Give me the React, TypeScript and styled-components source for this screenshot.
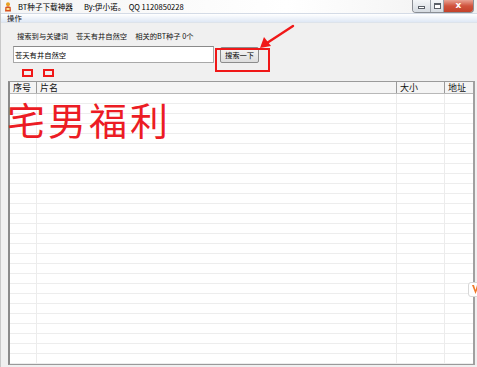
import styled, { createGlobalStyle } from "styled-components";

const GlobalStyle = createGlobalStyle`
  html, body {
    margin: 0;
    padding: 0;
    background: #f0f0f0;
  }
  * {
    box-sizing: border-box;
  }
`;

const FONT = `"Noto Sans CJK SC", "Liberation Sans", sans-serif`;

const columns = [
  { title: "序号", width: 27 },
  { title: "片名", width: 360 },
  { title: "大小", width: 48 },
  { title: "地址", width: 29 },
];

const rowCount = 27;

export default function App() {
  return (
    <>
      <GlobalStyle />
      <Window>
        <TitleBar>
          <AppIcon viewBox="0 0 8 10">
            <circle cx="4" cy="2.2" r="2" fill="#e8a020" />
            <path d="M1 9.5 L1.3 5 Q4 3.5 6.7 5 L7 9.5 Z" fill="#d9531e" />
            <rect x="2.5" y="6" width="3" height="2" fill="#fbe08a" />
          </AppIcon>
          <TitleText>BT种子下载神器</TitleText>
          <TitleText>By:伊小诺。&nbsp; QQ 1120850228</TitleText>
          <WindowButtons>
            <CaptionButton $w={18}>
              <MinGlyph />
            </CaptionButton>
            <CaptionButton $w={13}>
              <MaxGlyph />
            </CaptionButton>
            <CloseButton>x</CloseButton>
          </WindowButtons>
        </TitleBar>

        <MenuBar>
          <MenuItem>操作</MenuItem>
        </MenuBar>

        <Body>
          <InfoRow>
            <span>搜索到与关键词</span>
            <span>苍天有井自然空</span>
            <span>相关的BT种子 0个</span>
          </InfoRow>

          <SearchRow>
            <SearchInput defaultValue="苍天有井自然空" />
            <SearchButton>搜索一下</SearchButton>
          </SearchRow>

          <ListView>
            <HeaderRow>
              {columns.map((c) => (
                <HeaderCell key={c.title} style={{ width: c.width }}>
                  {c.title}
                </HeaderCell>
              ))}
            </HeaderRow>
            <Rows>
              {Array.from({ length: rowCount }).map((_, i) => (
                <Row key={i}>
                  {columns.map((c) => (
                    <Cell key={c.title} style={{ width: c.width }} />
                  ))}
                </Row>
              ))}
            </Rows>
          </ListView>
        </Body>

        <Annotation $x={214} $y={48} $w={55} $h={24} />
        <Annotation $x={21} $y={69} $w={11} $h={8} />
        <Annotation $x={42} $y={69} $w={11} $h={8} />

        <Arrow viewBox="0 0 477 367">
          <line
            x1="292"
            y1="26"
            x2="266"
            y2="43"
            stroke="#f01818"
            strokeWidth="2.4"
            strokeLinecap="round"
          />
          <polygon points="259,48 263,37 270,46" fill="#f01818" />
        </Arrow>

        <Stamp>宅男福利</Stamp>

        <SideTab>
          <svg width="7" height="9" viewBox="0 0 7 9">
            <path d="M0 0 L3.5 9 L7 0 L5 0 L3.5 5 L2 0 Z" fill="#f07a2a" />
          </svg>
        </SideTab>
      </Window>
    </>
  );
}

const Window = styled.div`
  position: relative;
  width: 477px;
  height: 367px;
  overflow: hidden;
  background: #f0f0f0;
  font-family: ${FONT};
  color: #111;
  border-left: 1px solid #c8c8c8;
  display: flex;
  flex-direction: column;
`;

const TitleBar = styled.div`
  height: 17px;
  display: flex;
  align-items: center;
  padding-left: 3px;
  background: linear-gradient(90deg, #f4f4f4 0%, #ffffff 60%, #f0f0f0 100%);
  position: relative;
`;

const AppIcon = styled.svg`
  width: 8px;
  height: 10px;
  margin-right: 6px;
  margin-top: 1px;
`;

const TitleText = styled.span`
  font-size: 7.6px;
  line-height: 1;
  margin-right: 11px;
  white-space: nowrap;
  color: #000;
`;

const WindowButtons = styled.div`
  position: absolute;
  right: 3px;
  top: 0;
  display: flex;
  height: 13px;
  border: 1px solid #8a8e94;
  border-top: none;
  border-radius: 0 0 4px 4px;
  overflow: hidden;
`;

const CaptionButton = styled.div<{ $w: number }>`
  width: ${(p) => p.$w}px;
  height: 100%;
  background: linear-gradient(#f4f6f8, #d6dbe1);
  border-right: 1px solid #9aa0a8;
  display: flex;
  align-items: center;
  justify-content: center;
`;

const MinGlyph = styled.div`
  width: 7px;
  height: 3px;
  border: 1px solid #5a6068;
  background: #fff;
  margin-top: 3px;
`;

const MaxGlyph = styled.div`
  width: 7px;
  height: 6px;
  border: 1px solid #5a6068;
  border-top-width: 2px;
  background: #fff;
`;

const CloseButton = styled.div`
  width: 29px;
  height: 100%;
  background: linear-gradient(#e8a293 0%, #d0533d 50%, #c3412a 100%);
  color: #fff;
  font-family: "DejaVu Sans", sans-serif;
  font-weight: bold;
  font-size: 9px;
  line-height: 11px;
  text-align: center;
`;

const MenuBar = styled.div`
  height: 12px;
  display: flex;
  align-items: center;
  padding-left: 6px;
  background: linear-gradient(#ffffff, #dfe8f5);
  border-top: 1px solid #d4dbe6;
  border-bottom: 1px solid #dde3ea;
`;

const MenuItem = styled.span`
  font-size: 7.4px;
  line-height: 1;
`;

const Body = styled.div`
  flex: 1;
  display: flex;
  flex-direction: column;
  padding: 8px 2px 2px 7px;
`;

const InfoRow = styled.div`
  display: flex;
  gap: 8px;
  padding-left: 9px;
  font-size: 7.3px;
  line-height: 10px;
  height: 10px;
  white-space: nowrap;
`;

const SearchRow = styled.div`
  display: flex;
  align-items: center;
  gap: 6px;
  margin-top: 5px;
  padding-left: 5px;
`;

const SearchInput = styled.input`
  width: 201px;
  height: 17px;
  border: 1px solid #a8a8a8;
  border-top-color: #8a8a8a;
  background: #fff;
  font-family: ${FONT};
  font-size: 7.3px;
  padding: 0 1px;
  outline: none;
  color: #000;
`;

const SearchButton = styled.button`
  width: 39px;
  height: 16px;
  border: 1px solid #8c8c8c;
  border-radius: 2px;
  background: linear-gradient(#f6f6f6, #dedede);
  font-family: ${FONT};
  font-size: 7.3px;
  padding: 0;
  color: #000;
`;

const ListView = styled.div`
  margin-top: 18px;
  flex: 1;
  background: #fff;
  border: 1px solid #9a9a9a;
  border-left: 2px solid #8a8a8a;
  border-right: 2px solid #a0a0a0;
  display: flex;
  flex-direction: column;
  overflow: hidden;
`;

const HeaderRow = styled.div`
  display: flex;
  height: 12px;
  background: #f4f4f4;
  border-bottom: 1px solid #b8b8b8;
  flex-shrink: 0;
`;

const HeaderCell = styled.div`
  flex-shrink: 0;
  height: 100%;
  border-right: 1px solid #9a9a9a;
  font-size: 9px;
  line-height: 12px;
  padding-left: 3px;
  white-space: nowrap;
  overflow: hidden;
`;

const Rows = styled.div`
  display: flex;
  flex-direction: column;
`;

const Row = styled.div`
  display: flex;
  height: 10px;
  flex-shrink: 0;
  border-bottom: 1px solid #ededed;
`;

const Cell = styled.div`
  flex-shrink: 0;
  height: 100%;
  border-right: 1px solid #ececec;
`;

const Annotation = styled.div<{ $x: number; $y: number; $w: number; $h: number }>`
  position: absolute;
  left: ${(p) => p.$x}px;
  top: ${(p) => p.$y}px;
  width: ${(p) => p.$w}px;
  height: ${(p) => p.$h}px;
  border: 2px solid #f01818;
  pointer-events: none;
`;

const Arrow = styled.svg`
  position: absolute;
  left: 0;
  top: 0;
  width: 477px;
  height: 367px;
  pointer-events: none;
`;

const Stamp = styled.div`
  position: absolute;
  left: 6px;
  top: 101px;
  font-family: ${FONT};
  font-size: 38px;
  font-weight: 400;
  line-height: 36px;
  letter-spacing: 3px;
  color: #ec1c24;
  white-space: nowrap;
  pointer-events: none;
`;

const SideTab = styled.div`
  position: absolute;
  left: 467px;
  top: 282px;
  width: 14px;
  height: 15px;
  background: #fff;
  border: 1px solid #d8d8d8;
  border-radius: 3px;
  display: flex;
  align-items: center;
  padding-left: 3px;
`;
